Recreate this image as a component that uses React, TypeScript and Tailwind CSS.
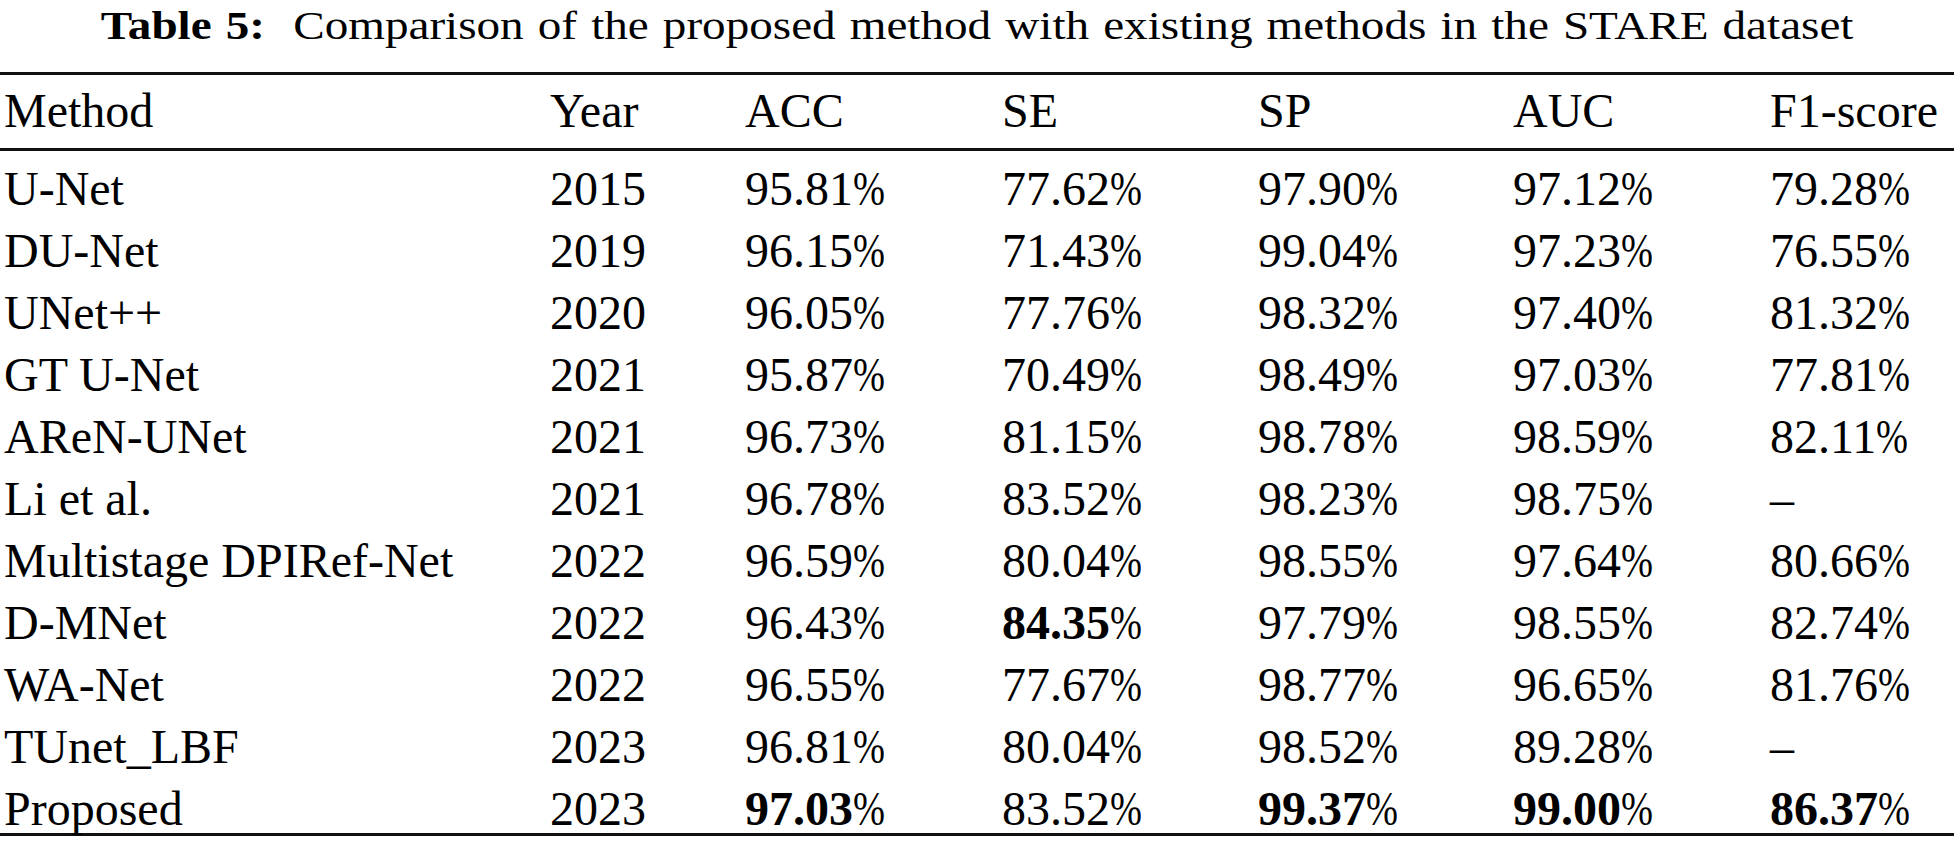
import React from 'react';

const headers = ['Method', 'Year', 'ACC', 'SE', 'SP', 'AUC', 'F1-score'];

// each value: [number, bold?]  "-" means no value
const rows: { method: string; year: string; vals: (string | [string, boolean])[] }[] = [
  { method: 'U-Net', year: '2015', vals: ['95.81', '77.62', '97.90', '97.12', '79.28'] },
  { method: 'DU-Net', year: '2019', vals: ['96.15', '71.43', '99.04', '97.23', '76.55'] },
  { method: 'UNet++', year: '2020', vals: ['96.05', '77.76', '98.32', '97.40', '81.32'] },
  { method: 'GT U-Net', year: '2021', vals: ['95.87', '70.49', '98.49', '97.03', '77.81'] },
  { method: 'AReN-UNet', year: '2021', vals: ['96.73', '81.15', '98.78', '98.59', '82.11'] },
  { method: 'Li et al.', year: '2021', vals: ['96.78', '83.52', '98.23', '98.75', '-'] },
  { method: 'Multistage DPIRef-Net', year: '2022', vals: ['96.59', '80.04', '98.55', '97.64', '80.66'] },
  { method: 'D-MNet', year: '2022', vals: ['96.43', ['84.35', true], '97.79', '98.55', '82.74'] },
  { method: 'WA-Net', year: '2022', vals: ['96.55', '77.67', '98.77', '96.65', '81.76'] },
  { method: 'TUnet_LBF', year: '2023', vals: ['96.81', '80.04', '98.52', '89.28', '-'] },
  { method: 'Proposed', year: '2023', vals: [['97.03', true], '83.52', ['99.37', true], ['99.00', true], ['86.37', true]] },
];

const grid = 'grid grid-cols-[550px_195px_257px_256px_255px_257px_1fr]';

function Value({ v }: { v: string | [string, boolean] }) {
  const [num, bold] = Array.isArray(v) ? v : [v, false];
  if (num === '-') return <span className="inline-block">–</span>;
  return (
    <span className="whitespace-nowrap">
      <span className={bold ? 'font-bold' : ''}>{num}</span>
      <span className="inline-block origin-left scale-x-[0.8]">%</span>
    </span>
  );
}

export default function App() {
  return (
    <div className="w-[1954px] h-[842px] bg-white text-black font-['Liberation_Serif','Times_New_Roman',serif] overflow-hidden">
      {/* caption */}
      <div className="h-[72px] pt-[5px] flex justify-center">
        <div className="text-[41px] leading-none scale-x-[1.15] [word-spacing:2px] whitespace-pre">
          <span className="font-bold">Table 5:</span>  Comparison of the proposed method with existing methods in the STARE dataset
        </div>
      </div>

      <div className="h-[3px] bg-[#111]" />

      {/* header */}
      <div className={`${grid} h-[73px] pt-[12px] text-[48px] leading-none`}>
        {headers.map((h, i) => (
          <div key={h} className={i === 0 ? 'pl-[4px]' : ''}>
            {h}
          </div>
        ))}
      </div>

      <div className="h-[3px] bg-[#111]" />

      {/* body */}
      <div>
        {rows.map((r) => (
          <div key={r.method} className={`${grid} h-[62px] pt-[14px] text-[48px] leading-none`}>
            <div className="pl-[4px] whitespace-nowrap">{r.method}</div>
            <div>{r.year}</div>
            {r.vals.map((v, i) => (
              <div key={i}>
                <Value v={v} />
              </div>
            ))}
          </div>
        ))}
      </div>

      <div className="h-[3px] bg-[#111]" />
    </div>
  );
}
